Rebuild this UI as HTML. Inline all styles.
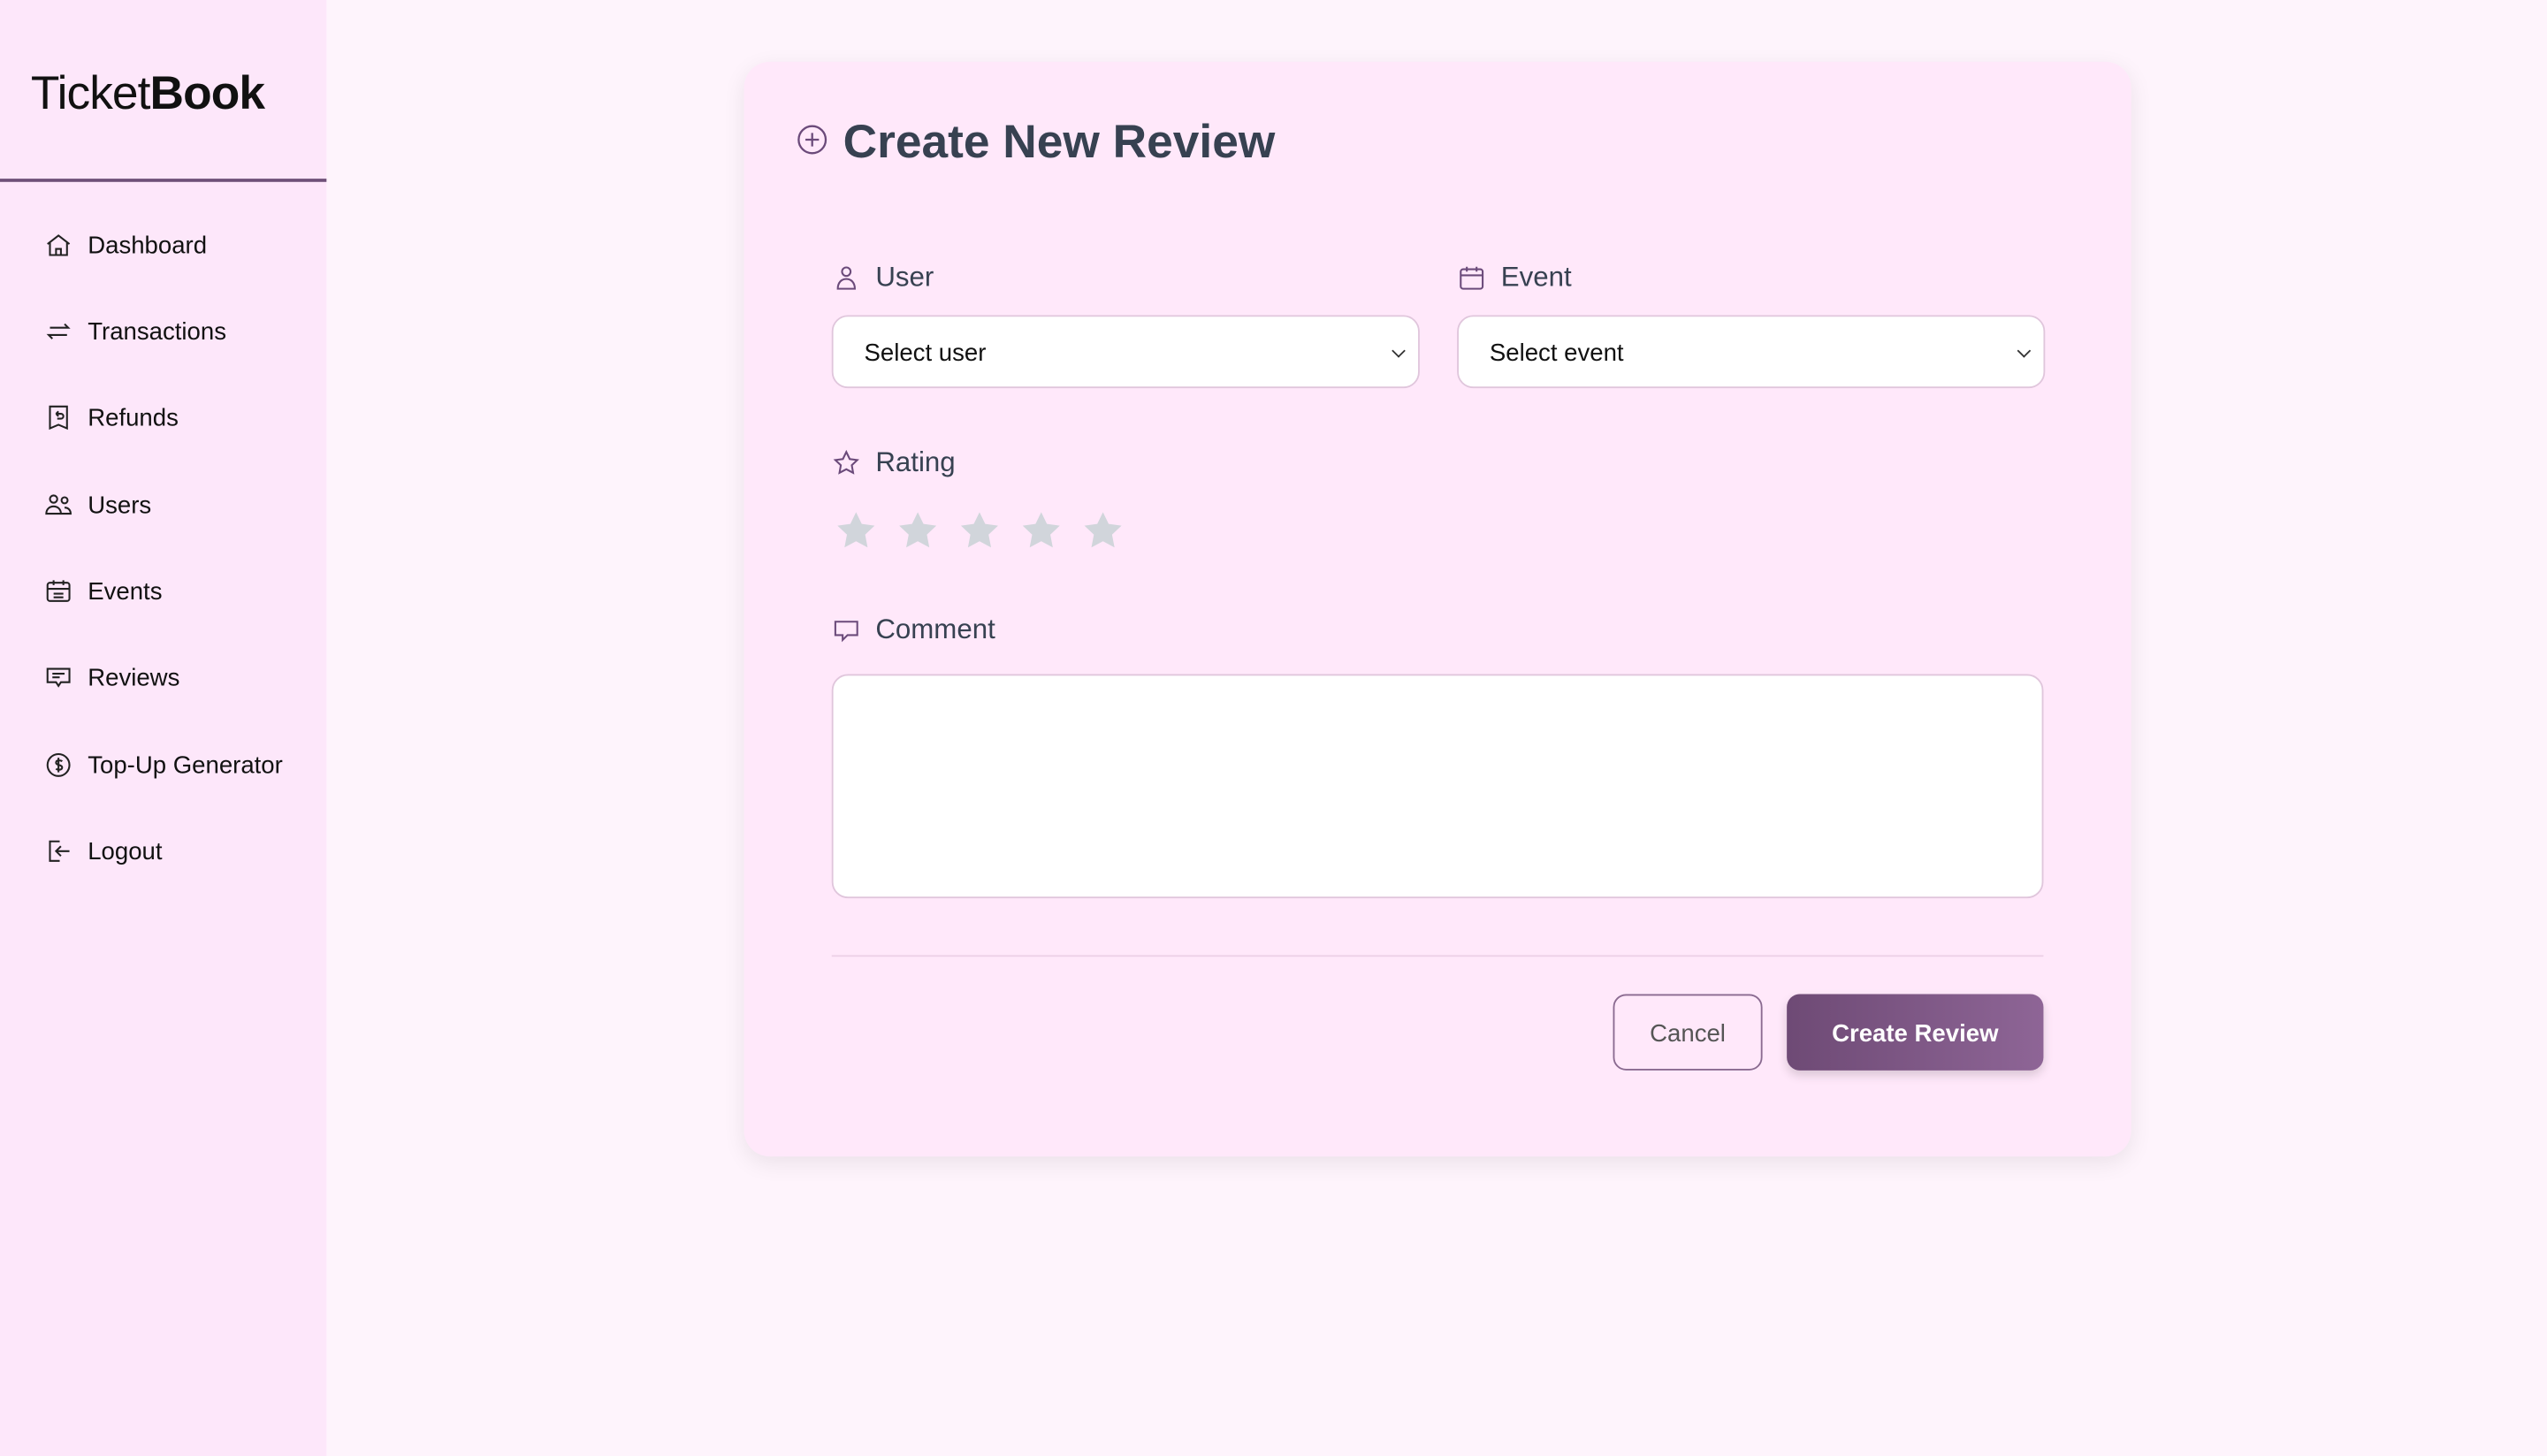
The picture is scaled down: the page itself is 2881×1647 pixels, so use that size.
<!DOCTYPE html>
<html><head><meta charset="utf-8"><style>
html,body{margin:0;padding:0;width:2881px;height:1647px;overflow:hidden;background:#fef4fc}
#w{width:1568px;height:897px;transform:scale(1.8374);transform-origin:0 0;position:relative;font-family:"Liberation Sans",sans-serif;color:#111}
.sb{position:absolute;left:0;top:0;width:201px;height:897px;background:#fde7fa}
.logo{position:absolute;left:19px;top:42px;font-size:29px;letter-spacing:-0.5px}
.logo b{font-weight:900}
.hr{position:absolute;left:0;top:110px;width:201px;height:2px;background:#6e5078}
.nav{position:absolute;left:27px;font-size:15px;display:flex;align-items:center;gap:9px}
.nav svg{width:18px;height:18px;fill:none;stroke:#222;stroke-width:1.5}
.card{position:absolute;left:458px;top:38px;width:854px;height:674px;background:#ffe8fa;border-radius:16px;box-shadow:0 4px 14px rgba(0,0,0,.08)}
h1{position:absolute;left:61px;top:34px;margin:0;font-size:29px;font-weight:900;color:#374151}
.lab{position:absolute;font-size:17px;color:#374151;display:flex;align-items:center;gap:9px}
.lab svg{width:18px;height:18px;fill:none;stroke:#6b4a7a;stroke-width:1.5}
.sel{position:absolute;height:45px;background:#fff;border:1px solid #e0c6dc;border-radius:10px;box-sizing:border-box;font-size:15px;padding:14px 19px;color:#111}
.sel:after{content:"";position:absolute;right:9px;top:18px;width:5px;height:5px;border-right:1.5px solid #333;border-bottom:1.5px solid #333;transform:rotate(45deg)}
.star{position:absolute;top:275px;width:28px;height:28px;fill:#d1d5db}
.ta{position:absolute;left:54px;top:377px;width:746px;height:138px;background:#fff;border:1px solid #e0c6dc;border-radius:10px;box-sizing:border-box}
.line{position:absolute;left:54px;top:550px;width:746px;height:1px;background:#ecd0e6}
.btn{position:absolute;top:574px;height:47px;border-radius:8px;box-sizing:border-box;font-size:15px;display:flex;align-items:center;justify-content:center;padding-top:2px}
</style></head><body><div id="w">
<div class="sb">
<div class="logo">Ticket<b>Book</b></div>
<div class="hr"></div>
<div class="nav" style="top:142px"><svg viewBox="0 0 24 24"><path d="M3 11 12 4l9 7M5 9.5V20h14V9.5M10 20v-5h4v5"/></svg>Dashboard</div>
<div class="nav" style="top:195px"><svg viewBox="0 0 24 24"><path d="M5 9h15l-3-3M19 15H4l3 3"/></svg>Transactions</div>
<div class="nav" style="top:248px"><svg viewBox="0 0 24 24"><path d="M5 3h14v18l-7-3-7 3zM10 9h4a2 2 0 010 4h-3M10 9l2-2M10 9l2 2"/></svg>Refunds</div>
<div class="nav" style="top:302px"><svg viewBox="0 0 24 24"><circle cx="8" cy="7" r="3"/><circle cx="17" cy="8" r="2.5"/><path d="M2 19c0-4 3-6 6-6s6 2 6 6zM14 19h8c0-3-2-5-5-5"/></svg>Users</div>
<div class="nav" style="top:355px"><svg viewBox="0 0 24 24"><rect x="3" y="5" width="18" height="15" rx="2"/><path d="M3 10h18M8 3v4M16 3v4M8 14h8M8 17h8"/></svg>Events</div>
<div class="nav" style="top:408px"><svg viewBox="0 0 24 24"><path d="M3 5h18v11h-7l-2 3-2-3H3zM7 9h10M7 12h6"/></svg>Reviews</div>
<div class="nav" style="top:462px"><svg viewBox="0 0 24 24"><circle cx="12" cy="12" r="9"/><path d="M15 9c-1-1-5-1.5-5 1s5 1.5 5 4-4 2-5 1M12 6v12"/></svg>Top-Up Generator</div>
<div class="nav" style="top:515px"><svg viewBox="0 0 24 24"><path d="M13 4H5v16h8M10 12h11M14 8l-4 4 4 4"/></svg>Logout</div>
</div>
<div class="card">
<svg style="position:absolute;left:32px;top:38px;width:20px;height:20px;fill:none;stroke:#6b4a7a;stroke-width:1.5" viewBox="0 0 24 24"><circle cx="12" cy="12" r="10"/><path d="M12 7v10M7 12h10"/></svg>
<h1>Create New Review</h1>
<div class="lab" style="left:54px;top:123px"><svg viewBox="0 0 24 24"><circle cx="12" cy="7" r="3.5"/><path d="M5 21c0-5 3-8 7-8s7 3 7 8z"/></svg>User</div>
<div class="lab" style="left:439px;top:123px"><svg viewBox="0 0 24 24"><rect x="3" y="5" width="18" height="16" rx="2"/><path d="M3 10h18M8 3v4M16 3v4"/></svg>Event</div>
<div class="sel" style="left:54px;top:156px;width:362px">Select user</div>
<div class="sel" style="left:439px;top:156px;width:362px">Select event</div>
<div class="lab" style="left:54px;top:237px"><svg viewBox="0 0 24 24"><path d="M12 3l2.8 5.8 6.2.8-4.5 4.3 1.1 6.2L12 17.2 6.4 20.1l1.1-6.2L3 9.6l6.2-.8z"/></svg>Rating</div>
<svg class="star" style="left:55px" viewBox="0 0 24 24"><path d="M12 2l3 6.2 6.8.9-5 4.7 1.3 6.8L12 17.3l-6.1 3.3 1.3-6.8-5-4.7L9 8.2z"/></svg>
<svg class="star" style="left:93px" viewBox="0 0 24 24"><path d="M12 2l3 6.2 6.8.9-5 4.7 1.3 6.8L12 17.3l-6.1 3.3 1.3-6.8-5-4.7L9 8.2z"/></svg>
<svg class="star" style="left:131px" viewBox="0 0 24 24"><path d="M12 2l3 6.2 6.8.9-5 4.7 1.3 6.8L12 17.3l-6.1 3.3 1.3-6.8-5-4.7L9 8.2z"/></svg>
<svg class="star" style="left:169px" viewBox="0 0 24 24"><path d="M12 2l3 6.2 6.8.9-5 4.7 1.3 6.8L12 17.3l-6.1 3.3 1.3-6.8-5-4.7L9 8.2z"/></svg>
<svg class="star" style="left:207px" viewBox="0 0 24 24"><path d="M12 2l3 6.2 6.8.9-5 4.7 1.3 6.8L12 17.3l-6.1 3.3 1.3-6.8-5-4.7L9 8.2z"/></svg>
<div class="lab" style="left:54px;top:340px"><svg viewBox="0 0 24 24"><path d="M3 5h18v11h-8l-4 4v-4H3zM8 10.5h.01M12 10.5h.01M16 10.5h.01"/></svg>Comment</div>
<div class="ta"></div>
<div class="line"></div>
<div class="btn" style="left:535px;width:92px;border:1px solid #8a6a90;color:#555">Cancel</div>
<div class="btn" style="left:642px;width:158px;background:linear-gradient(90deg,#6e4a75,#8e6596);color:#fff;font-weight:bold;box-shadow:0 3px 6px rgba(0,0,0,.15)">Create Review</div>
</div>
</div></body></html>
